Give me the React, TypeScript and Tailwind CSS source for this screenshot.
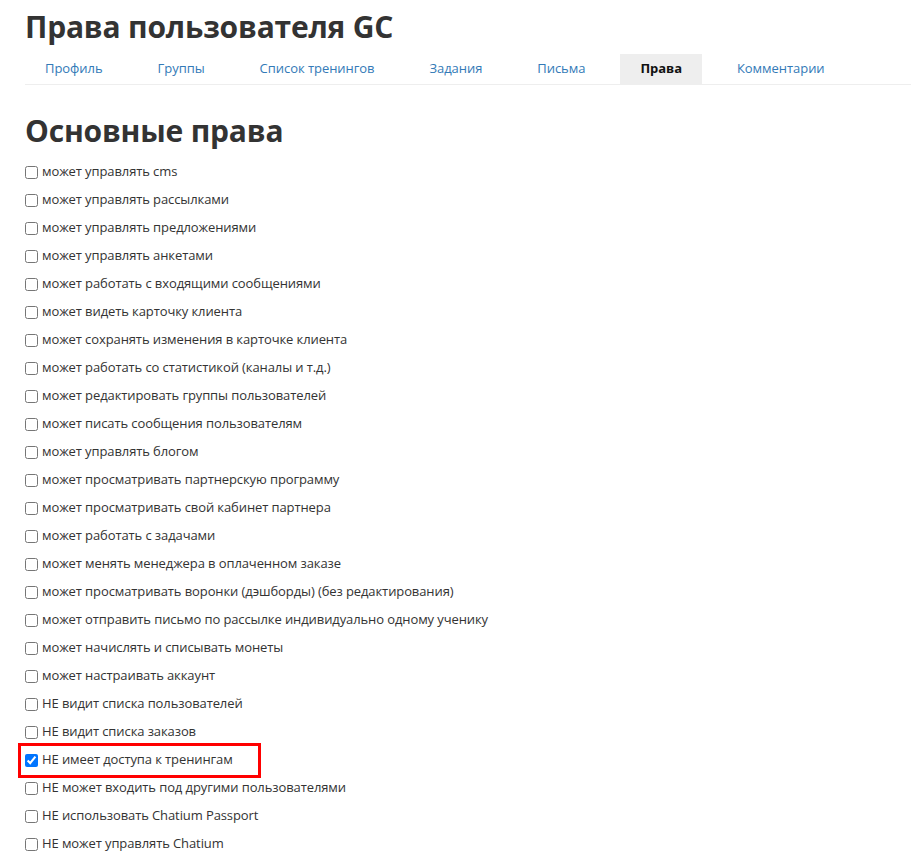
import React from "react";

const tabs = ["Профиль", "Группы", "Список тренингов", "Задания", "Письма", "Права", "Комментарии"];
const items: [string, boolean][] = [
  ["может управлять cms", false],
  ["может управлять рассылками", false],
  ["может управлять предложениями", false],
  ["может управлять анкетами", false],
  ["может работать с входящими сообщениями", false],
  ["может видеть карточку клиента", false],
  ["может сохранять изменения в карточке клиента", false],
  ["может работать со статистикой (каналы и т.д.)", false],
  ["может редактировать группы пользователей", false],
  ["может писать сообщения пользователям", false],
  ["может управлять блогом", false],
  ["может просматривать партнерскую программу", false],
  ["может просматривать свой кабинет партнера", false],
  ["может работать с задачами", false],
  ["может менять менеджера в оплаченном заказе", false],
  ["может просматривать воронки (дэшборды) (без редактирования)", false],
  ["может отправить письмо по рассылке индивидуально одному ученику", false],
  ["может начислять и списывать монеты", false],
  ["может настраивать аккаунт", false],
  ["НЕ видит списка пользователей", false],
  ["НЕ видит списка заказов", false],
  ["НЕ имеет доступа к тренингам", true],
  ["НЕ может входить под другими пользователями", false],
  ["НЕ использовать Chatium Passport", false],
  ["НЕ может управлять Chatium", false],
];

export default function App() {
  return (
    <div className="min-h-[866px] bg-white pl-[25px] text-[#333]" style={{ fontFamily: "'Open Sans', sans-serif" }}>
      <h1 className="pt-[8px] text-[30px] font-bold leading-[38px] tracking-[-0.2px] text-[#333]">Права пользователя GC</h1>
      <div className="mt-[8px] flex h-[31px] border-b border-[#eee]">
        {tabs.map((t) => (
          <div
            key={t}
            className={
              "mr-[15px] flex h-[30px] items-center px-[20px] text-[13px] tracking-[-0.05px] " +
              (t === "Права" ? "bg-[#eee] font-bold text-[#111]" : "text-[#337ab7]")
            }
          >
            {t}
          </div>
        ))}
      </div>
      <h2 className="mt-[26px] text-[30px] font-bold leading-[40px] tracking-[-0.2px] text-[#333]">Основные права</h2>
      <div className="mt-[7px] flex flex-col">
        {items.map(([label, checked]) => (
          <div key={label} className="relative flex h-[28px] items-center">
            {checked && (
              <div className="absolute left-[-7px] top-[-3px] h-[35px] w-[243px] border-[3px] border-[#f00]" />
            )}
            <input
              type="checkbox"
              defaultChecked={checked}
              className="h-[13px] w-[13px] accent-[#0075ff]"
            />
            <span className="ml-[4px] text-[13px] tracking-[-0.1px] text-[#333]">{label}</span>
          </div>
        ))}
      </div>
    </div>
  );
}
